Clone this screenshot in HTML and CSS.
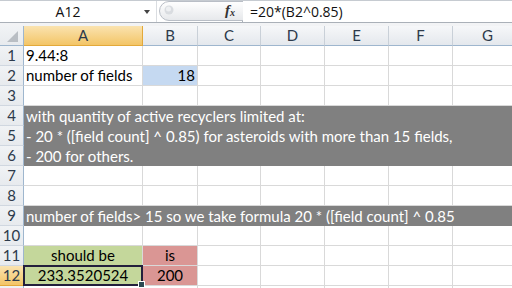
FILE: index.html
```html
<!DOCTYPE html>
<html>
<head>
<meta charset="utf-8">
<link rel="stylesheet" href="styles.css">
</head>
<body>
<div class="app">
  <div class="fbar">
    <div class="namebox"><span class="ref">A12</span><span class="dd"></span></div>
    <div class="grip">
      <svg width="86" height="22" viewBox="0 0 86 22">
        <defs>
          <linearGradient id="g" x1="0" y1="0" x2="0" y2="1">
            <stop offset="0" stop-color="#ffffff"/>
            <stop offset="1" stop-color="#e6e8eb"/>
          </linearGradient>
        </defs>
        <path d="M86 1.5 H12 A9.5 9.5 0 0 0 12 20.5 H86" fill="url(#g)" stroke="#b9bec6" stroke-width="1"/>
        <circle cx="12" cy="10" r="4.5" fill="#d9dce0"/>
        <circle cx="11.5" cy="9" r="2.5" fill="#eef0f2"/>
      </svg>
      <span class="fx">f<sub>x</sub></span>
    </div>
    <div class="formula">=20*(B2^0.85)</div>
  </div>
  <div class="gap"></div>
  <div class="sheet">
    <div class="row head">
      <div class="rh corner"><span class="tri"></span></div>
      <div class="ch a sel">A</div>
      <div class="ch b">B</div>
      <div class="ch c">C</div>
      <div class="ch d">D</div>
      <div class="ch e">E</div>
      <div class="ch f">F</div>
      <div class="ch g">G</div>
    </div>
    <div class="row">
      <div class="rh">1</div>
      <div class="cell a">9.44:8</div><div class="cell b"></div><div class="cell c"></div><div class="cell d"></div><div class="cell e"></div><div class="cell f"></div><div class="cell g"></div>
    </div>
    <div class="row">
      <div class="rh">2</div>
      <div class="cell a">number of fields</div><div class="cell b blue num">18</div><div class="cell c"></div><div class="cell d"></div><div class="cell e"></div><div class="cell f"></div><div class="cell g"></div>
    </div>
    <div class="row">
      <div class="rh">3</div>
      <div class="cell a"></div><div class="cell b"></div><div class="cell c"></div><div class="cell d"></div><div class="cell e"></div><div class="cell f"></div><div class="cell g"></div>
    </div>
    <div class="row">
      <div class="rh">4</div>
      <div class="span dark">with quantity of active recyclers limited at:</div>
    </div>
    <div class="row">
      <div class="rh">5</div>
      <div class="span dark">- 20 * ([field count] ^ 0.85) for asteroids with more than 15 fields,</div>
    </div>
    <div class="row">
      <div class="rh">6</div>
      <div class="span dark">- 200 for others.</div>
    </div>
    <div class="row">
      <div class="rh">7</div>
      <div class="cell a"></div><div class="cell b"></div><div class="cell c"></div><div class="cell d"></div><div class="cell e"></div><div class="cell f"></div><div class="cell g"></div>
    </div>
    <div class="row">
      <div class="rh">8</div>
      <div class="cell a"></div><div class="cell b"></div><div class="cell c"></div><div class="cell d"></div><div class="cell e"></div><div class="cell f"></div><div class="cell g"></div>
    </div>
    <div class="row">
      <div class="rh">9</div>
      <div class="span dark">number of fields&gt; 15 so we take formula 20 * ([field count] ^ 0.85</div>
    </div>
    <div class="row">
      <div class="rh">10</div>
      <div class="cell a"></div><div class="cell b"></div><div class="cell c"></div><div class="cell d"></div><div class="cell e"></div><div class="cell f"></div><div class="cell g"></div>
    </div>
    <div class="row">
      <div class="rh">11</div>
      <div class="cell a green ctr">should be</div><div class="cell b red ctr">is</div><div class="cell c"></div><div class="cell d"></div><div class="cell e"></div><div class="cell f"></div><div class="cell g"></div>
    </div>
    <div class="row">
      <div class="rh selrow">12</div>
      <div class="cell a green ctr active">233.3520524</div><div class="cell b red ctr">200</div><div class="cell c"></div><div class="cell d"></div><div class="cell e"></div><div class="cell f"></div><div class="cell g"></div>
    </div>
    <div class="row">
      <div class="rh"></div>
      <div class="cell a"></div><div class="cell b"></div><div class="cell c"></div><div class="cell d"></div><div class="cell e"></div><div class="cell f"></div><div class="cell g"></div>
    </div>
  </div>
</div>
</body>
</html>
```

FILE: styles.css
```css
* { box-sizing: border-box; }
html, body { margin: 0; padding: 0; background: #fff; overflow: hidden; }
body { width: 512px; height: 288px; font-family: "Lato", "Open Sans", sans-serif; }
.app { width: 512px; height: 288px; overflow: hidden; }

.fbar {
  height: 23px;
  display: flex;
  border-top: 1px solid #c6cbd1;
  border-bottom: 1px solid #aab0b8;
  background: #fff;
}
.namebox {
  width: 157px;
  display: flex;
  align-items: center;
  position: relative;
  border-right: 1px solid #dadde1;
}
.ref {
  flex: 1;
  text-align: center;
  font-family: "Open Sans", sans-serif;
  font-size: 14px;
  color: #111;
  padding-right: 8px;
}
.dd {
  width: 0; height: 0;
  border-left: 3.5px solid transparent;
  border-right: 3.5px solid transparent;
  border-top: 4px solid #444;
  margin-right: 6px;
}
.grip {
  width: 86px;
  position: relative;
  border-right: 1px solid #aab0b8;
}
.grip svg { display: block; position: absolute; left: 0; top: -1px; }
.fx {
  position: absolute;
  left: 68px;
  top: 1px;
  font-family: "Liberation Serif", serif;
  font-style: italic;
  font-size: 15px;
  font-weight: bold;
  color: #333;
}
.fx sub { font-size: 10px; vertical-align: -1px; }
.formula {
  flex: 1;
  padding-left: 7px;
  font-family: "Open Sans", sans-serif;
  font-size: 14px;
  line-height: 21px;
  color: #111;
}
.gap { height: 3px; background: #f2f3f5; }

.sheet { font-size: 15px; color: #000; }
.row { display: flex; height: 20px; }
.head { height: 20px; }
.rh {
  width: 24px;
  flex: none;
  background: linear-gradient(#f1f3f5, #e7eaee);
  border-right: 1px solid #9eb6ce;
  border-bottom: 1px solid #d0d7e0;
  text-align: center;
  line-height: 19px;
  color: #2d3a4b;
  font-size: 15px;
}
.corner { position: relative; border-bottom-color: #9eb6ce; }
.tri {
  position: absolute;
  right: 5px;
  bottom: 3px;
  width: 0; height: 0;
  border-left: 11px solid transparent;
  border-bottom: 11px solid #b9bec4;
}
.ch {
  flex: none;
  background: linear-gradient(#f6f7f9, #e4e8ed);
  border-right: 1px solid #c9d0d8;
  border-bottom: 1px solid #9eb6ce;
  text-align: center;
  line-height: 19px;
  color: #2d3a4b;
}
.ch.sel, .rh.selrow {
  background: linear-gradient(#fae3b0, #f3c567);
  border-bottom-color: #e3a93a;
  border-right-color: #e3a93a;
  color: #2d3a4b;
}
.a { width: 119px; }
.b { width: 55px; }
.c { width: 63px; }
.d { width: 64px; }
.e { width: 64px; }
.f { width: 64px; }
.g { width: 70px; }

.cell {
  flex: none;
  border-right: 1px solid #d9d9d9;
  border-bottom: 1px solid #d9d9d9;
  padding: 0 2px;
  line-height: 19px;
  white-space: nowrap;
  overflow: visible;
}
.span {
  flex: 1;
  padding: 0 2px;
  line-height: 20px;
  white-space: nowrap;
  overflow: hidden;
}
.dark { background: #808080; color: #fff; }
.blue { background: #c5d9f1; }
.green { background: #c4d79b; }
.red { background: #da9694; }
.num { text-align: right; }
.ctr { text-align: center; }
.active { position: relative; }
.active::before {
  content: "";
  position: absolute;
  left: -1px; top: -1px; right: -1px; bottom: -1px;
  border: 2px solid #231f3c;
}
.active::after {
  content: "";
  position: absolute;
  right: -3px; bottom: -3px;
  width: 5px; height: 5px;
  background: #2c4a52;
  border: 1px solid #fff;
}
```
